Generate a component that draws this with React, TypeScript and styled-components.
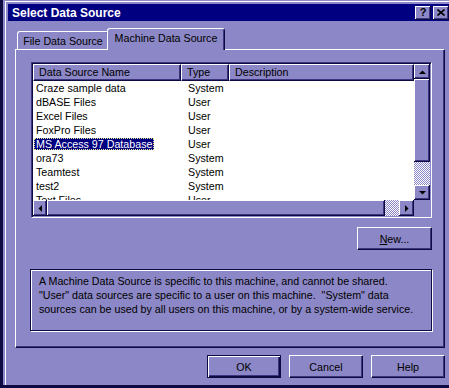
import React from "react";
import styled, { createGlobalStyle } from "styled-components";

const FACE = "#8c87c6";
const DARK = "#0c0a40";
const SHADOW = "#3c3680";
const LIGHT = "#ffffff";
const TITLE = "#000080";

const Global = createGlobalStyle`
  html, body { margin: 0; padding: 0; }
  body {
    background: ${FACE};
    width: 449px;
    height: 388px;
    overflow: hidden;
    font-family: "Liberation Sans", Arial, sans-serif;
    font-size: 10.7px;
    color: #000;
  }
`;

const Frame = styled.div`
  box-sizing: border-box;
  width: 449px;
  height: 388px;
  border-left: 3px solid ${DARK};
  border-bottom: 3px solid ${DARK};
  padding: 1px 0 0 2px;
  display: flex;
`;

const Inner = styled.div`
  flex: 1;
  min-width: 0;
  display: flex;
  flex-direction: column;
  border-top: 1px solid ${LIGHT};
  border-left: 1px solid ${LIGHT};
  padding: 2px 0 0 2px;
`;

const TitleBar = styled.div`
  flex: none;
  height: 17px;
  background: ${TITLE};
  display: flex;
  align-items: center;
  padding: 0 0 0 4px;
  color: #fff;
  font-weight: bold;
  font-size: 12px;
`;

const TitleText = styled.span`
  flex: 1;
`;

const CaptionButtons = styled.div`
  display: flex;
  gap: 2px;
`;

const CaptionButton = styled.div`
  box-sizing: border-box;
  width: 16px;
  height: 14px;
  background: ${FACE};
  box-shadow: inset -1px -1px ${DARK}, inset 1px 1px ${LIGHT}, inset -2px -2px ${SHADOW};
  display: flex;
  align-items: center;
  justify-content: center;
  color: #000;
  font-size: 11px;
  font-weight: bold;
  line-height: 1;
`;

const Body = styled.div`
  flex: 1;
  display: flex;
  flex-direction: column;
  padding: 7px 4px 0 7px;
`;

const TabRow = styled.div`
  flex: none;
  height: 21px;
  display: flex;
  align-items: flex-end;
  padding-left: 2px;
`;

const Tab = styled.div<{ $active?: boolean; $w: number }>`
  box-sizing: border-box;
  position: relative;
  z-index: ${(p) => (p.$active ? 2 : 1)};
  width: ${(p) => p.$w}px;
  height: ${(p) => (p.$active ? 22 : 18)}px;
  margin-bottom: ${(p) => (p.$active ? -1 : 0)}px;
  margin-left: ${(p) => (p.$active ? -2 : 0)}px;
  background: ${FACE};
  border-top: 1px solid ${LIGHT};
  border-left: 1px solid ${LIGHT};
  border-right: 1px solid ${DARK};
  box-shadow: inset -1px 0 ${SHADOW};
  border-radius: 3px 3px 0 0;
  display: flex;
  align-items: center;
  justify-content: center;
  padding-bottom: ${(p) => (p.$active ? 3 : 0)}px;
  white-space: nowrap;
`;

const Panel = styled.div`
  flex: 1;
  box-sizing: border-box;
  border-top: 1px solid ${LIGHT};
  border-left: 1px solid ${LIGHT};
  border-right: 1px solid ${DARK};
  border-bottom: 1px solid ${DARK};
  box-shadow: inset -1px -1px ${SHADOW};
  padding: 12px 11px 0 15px;
  display: flex;
  flex-direction: column;
`;

const ListView = styled.div`
  box-sizing: border-box;
  width: 401px;
  height: 156px;
  border-top: 1px solid ${SHADOW};
  border-left: 1px solid ${SHADOW};
  border-right: 1px solid ${LIGHT};
  border-bottom: 1px solid ${LIGHT};
  box-shadow: inset 1px 1px ${DARK}, inset -1px -1px ${FACE};
  padding: 1px;
  display: grid;
  grid-template-columns: 381px 16px;
  grid-template-rows: 136px 16px;
  background: #fff;
`;

const ListArea = styled.div`
  overflow: hidden;
  background: #fff;
`;

const Header = styled.div`
  display: flex;
  height: 17px;
`;

const HeaderCell = styled.div<{ $w: number }>`
  box-sizing: border-box;
  flex: none;
  width: ${(p) => p.$w}px;
  height: 17px;
  background: ${FACE};
  border-top: 1px solid ${LIGHT};
  border-left: 1px solid ${LIGHT};
  border-right: 1px solid ${DARK};
  border-bottom: 1px solid ${DARK};
  box-shadow: inset -1px -1px ${SHADOW};
  padding-left: 5px;
  line-height: 15px;
  white-space: nowrap;
  overflow: hidden;
`;

const Row = styled.div`
  display: flex;
  align-items: center;
  height: 14px;
`;

const Cell = styled.div<{ $w: number; $pad: number }>`
  box-sizing: border-box;
  flex: none;
  width: ${(p) => p.$w}px;
  padding-left: ${(p) => p.$pad}px;
  white-space: nowrap;
  display: flex;
  align-items: center;
`;

const CellText = styled.span<{ $selected?: boolean }>`
  display: inline-block;
  height: 12px;
  line-height: 12px;
  padding: 0 2px;
  background: ${(p) => (p.$selected ? TITLE : "transparent")};
  color: ${(p) => (p.$selected ? "#fff" : "#000")};
  outline: ${(p) => (p.$selected ? `1px dotted #e8e890` : "none")};
  outline-offset: -1px;
`;

const VScroll = styled.div`
  display: flex;
  flex-direction: column;
`;

const HScroll = styled.div`
  display: flex;
`;

const Corner = styled.div`
  background: ${FACE};
`;

const ScrollButton = styled.div<{ $w: number; $h: number }>`
  box-sizing: border-box;
  flex: none;
  width: ${(p) => p.$w}px;
  height: ${(p) => p.$h}px;
  background: ${FACE};
  box-shadow: inset -1px -1px ${DARK}, inset 1px 1px ${LIGHT}, inset -2px -2px ${SHADOW};
  display: flex;
  align-items: center;
  justify-content: center;
`;

const Thumb = styled.div<{ $w: number; $h: number }>`
  box-sizing: border-box;
  flex: none;
  width: ${(p) => p.$w}px;
  height: ${(p) => p.$h}px;
  background: ${FACE};
  box-shadow: inset -1px -1px ${DARK}, inset 1px 1px ${LIGHT}, inset -2px -2px ${SHADOW};
`;

const Track = styled.div`
  flex: 1;
  background: repeating-conic-gradient(${LIGHT} 0% 25%, ${FACE} 0% 50%) 0 0 / 2px 2px;
`;

const Button = styled.div<{ $default?: boolean; $w: number }>`
  box-sizing: border-box;
  width: ${(p) => p.$w}px;
  height: 23px;
  background: ${FACE};
  ${(p) =>
    p.$default
      ? `border: 1px solid ${DARK};
         box-shadow: inset 1px 1px ${LIGHT}, inset -1px -1px ${DARK}, inset -2px -2px ${SHADOW};`
      : `border-top: 1px solid ${LIGHT};
         border-left: 1px solid ${LIGHT};
         border-right: 1px solid ${DARK};
         border-bottom: 1px solid ${DARK};
         box-shadow: inset -1px -1px ${SHADOW};`}
  display: flex;
  align-items: center;
  justify-content: center;
  color: #000;
`;

const NewButtonWrap = styled.div`
  align-self: flex-end;
  margin: 9px 1px 0 0;
`;

const GroupBox = styled.div`
  box-sizing: border-box;
  width: 402px;
  height: 62px;
  margin: 19px 0 0 -1px;
  border: 1px solid ${DARK};
  box-shadow: 1px 1px 0 ${LIGHT}, inset 1px 1px 0 ${LIGHT};
  padding: 4px 0 0 8px;
  line-height: 14px;
  white-space: pre;
`;

const Footer = styled.div`
  flex: none;
  height: 37px;
  box-sizing: border-box;
  padding-top: 7px;
  display: flex;
  justify-content: flex-end;
  gap: 8px;
`;

type Dir = "up" | "down" | "left" | "right";
const Arrow = ({ dir }: { dir: Dir }) => {
  const pts: Record<Dir, string> = {
    up: "0,4 3.5,0.5 7,4",
    down: "0,0 7,0 3.5,3.5",
    left: "4,0 4,7 0.5,3.5",
    right: "0,0 0,7 3.5,3.5",
  };
  const vertical = dir === "up" || dir === "down";
  return (
    <svg width={vertical ? 7 : 4} height={vertical ? 4 : 7} viewBox={vertical ? "0 0 7 4" : "0 0 4 7"}>
      <polygon points={pts[dir]} fill="#000" />
    </svg>
  );
};

const COLS = [148, 48, 185];

const rows: [string, string][] = [
  ["Craze sample data", "System"],
  ["dBASE Files", "User"],
  ["Excel Files", "User"],
  ["FoxPro Files", "User"],
  ["MS Access 97 Database", "User"],
  ["ora73", "System"],
  ["Teamtest", "System"],
  ["test2", "System"],
  ["Text Files", "User"],
];

export default function App() {
  return (
    <>
      <Global />
      <Frame>
        <Inner>
          <TitleBar>
            <TitleText>Select Data Source</TitleText>
            <CaptionButtons>
              <CaptionButton>?</CaptionButton>
              <CaptionButton>
                <svg width="8" height="7" viewBox="0 0 8 7">
                  <path d="M0.5 0.5 L7.5 6.5 M7.5 0.5 L0.5 6.5" stroke="#000" strokeWidth="1.6" />
                </svg>
              </CaptionButton>
            </CaptionButtons>
          </TitleBar>
          <Body>
            <TabRow>
              <Tab $w={92}>File Data Source</Tab>
              <Tab $w={118} $active>
                Machine Data Source
              </Tab>
            </TabRow>
            <Panel>
              <ListView>
                <ListArea>
                  <Header>
                    <HeaderCell $w={COLS[0]}>Data Source Name</HeaderCell>
                    <HeaderCell $w={COLS[1]}>Type</HeaderCell>
                    <HeaderCell $w={COLS[2]}>Description</HeaderCell>
                  </Header>
                  {rows.map(([name, type], i) => (
                    <Row key={name}>
                      <Cell $w={COLS[0]} $pad={1}>
                        <CellText $selected={i === 4}>{name}</CellText>
                      </Cell>
                      <Cell $w={COLS[1]} $pad={5}>
                        <CellText>{type}</CellText>
                      </Cell>
                      <Cell $w={COLS[2]} $pad={5} />
                    </Row>
                  ))}
                </ListArea>
                <VScroll>
                  <ScrollButton $w={16} $h={15}>
                    <Arrow dir="up" />
                  </ScrollButton>
                  <Thumb $w={16} $h={83} />
                  <Track />
                  <ScrollButton $w={16} $h={15}>
                    <Arrow dir="down" />
                  </ScrollButton>
                </VScroll>
                <HScroll>
                  <ScrollButton $w={14} $h={16}>
                    <Arrow dir="left" />
                  </ScrollButton>
                  <Thumb $w={338} $h={16} />
                  <Track />
                  <ScrollButton $w={15} $h={16}>
                    <Arrow dir="right" />
                  </ScrollButton>
                </HScroll>
                <Corner />
              </ListView>
              <NewButtonWrap>
                <Button $w={75}>
                  <span>
                    <u>N</u>ew...
                  </span>
                </Button>
              </NewButtonWrap>
              <GroupBox>
                {"A Machine Data Source is specific to this machine, and cannot be shared.\n" +
                  "\"User\" data sources are specific to a user on this machine.  \"System\" data\n" +
                  "sources can be used by all users on this machine, or by a system-wide service."}
              </GroupBox>
            </Panel>
            <Footer>
              <Button $w={74} $default>
                OK
              </Button>
              <Button $w={74}>Cancel</Button>
              <Button $w={74}>Help</Button>
            </Footer>
          </Body>
        </Inner>
      </Frame>
    </>
  );
}
